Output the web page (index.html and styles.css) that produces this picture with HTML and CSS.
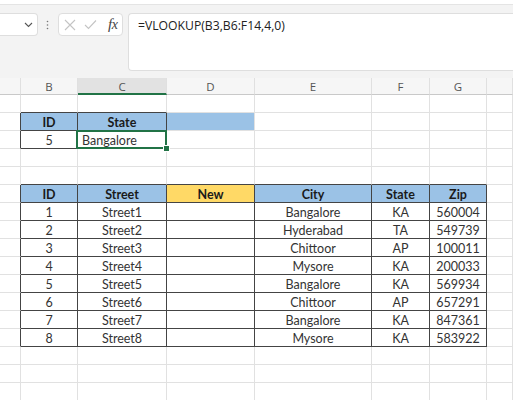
FILE: index.html
```html
<!DOCTYPE html>
<html>
<head>
<meta charset="utf-8">
<link rel="stylesheet" href="styles.css">
</head>
<body>
<div class="top"></div>
<div class="fbar">
  <div class="namebox">
    <svg class="chev" width="9" height="6" viewBox="0 0 9 6"><path d="M1 1 L4.5 4.5 L8 1" fill="none" stroke="#555" stroke-width="1.1"/></svg>
  </div>
  <div class="dots">
    <svg width="3" height="10" viewBox="0 0 3 10"><circle cx="1.5" cy="1.5" r="0.8" fill="#777"/><circle cx="1.5" cy="5" r="0.8" fill="#777"/><circle cx="1.5" cy="8.5" r="0.8" fill="#777"/></svg>
  </div>
  <div class="fxbox">
    <svg class="ico" width="12" height="12" viewBox="0 0 12 12"><path d="M1 1 L11 11 M11 1 L1 11" stroke="#c4c4c4" stroke-width="1.1" fill="none"/></svg>
    <svg class="ico" width="13" height="11" viewBox="0 0 13 11"><path d="M1 6 L4.5 9.5 L12 1.5" stroke="#c4c4c4" stroke-width="1.1" fill="none"/></svg>
    <span class="fx">f<span class="fxx">x</span></span>
  </div>
  <div class="formula">=VLOOKUP(B3,B6:F14,4,0)</div>
</div>
<div class="sheet">
  <div class="h"></div><div class="h">B</div><div class="h hsel">C</div><div class="h">D</div><div class="h">E</div><div class="h">F</div><div class="h">G</div><div class="h"></div>

  <div class="c"></div><div class="c B"></div><div class="c B"></div><div class="c"></div><div class="c"></div><div class="c"></div><div class="c"></div><div class="c"></div>

  <div class="c R"></div><div class="c R B blue b">ID</div><div class="c R B blue b">State</div><div class="c blue"></div><div class="c"></div><div class="c"></div><div class="c"></div><div class="c"></div>

  <div class="c R"></div><div class="c R B">5</div><div class="c R B sel">Bangalore</div><div class="c"></div><div class="c"></div><div class="c"></div><div class="c"></div><div class="c"></div>

  <div class="c"></div><div class="c"></div><div class="c"></div><div class="c"></div><div class="c"></div><div class="c"></div><div class="c"></div><div class="c"></div>

  <div class="c"></div><div class="c B"></div><div class="c B"></div><div class="c B"></div><div class="c B"></div><div class="c B"></div><div class="c B"></div><div class="c"></div>

  <div class="c R"></div><div class="c R B blue b">ID</div><div class="c R B blue b">Street</div><div class="c R B yellow b">New</div><div class="c R B blue b">City</div><div class="c R B blue b">State</div><div class="c R B blue b">Zip</div><div class="c"></div>

  <div class="c R"></div><div class="c R B">1</div><div class="c R B">Street1</div><div class="c R B"></div><div class="c R B">Bangalore</div><div class="c R B">KA</div><div class="c R B">560004</div><div class="c"></div>
  <div class="c R"></div><div class="c R B">2</div><div class="c R B">Street2</div><div class="c R B"></div><div class="c R B">Hyderabad</div><div class="c R B">TA</div><div class="c R B">549739</div><div class="c"></div>
  <div class="c R"></div><div class="c R B">3</div><div class="c R B">Street3</div><div class="c R B"></div><div class="c R B">Chittoor</div><div class="c R B">AP</div><div class="c R B">100011</div><div class="c"></div>
  <div class="c R"></div><div class="c R B">4</div><div class="c R B">Street4</div><div class="c R B"></div><div class="c R B">Mysore</div><div class="c R B">KA</div><div class="c R B">200033</div><div class="c"></div>
  <div class="c R"></div><div class="c R B">5</div><div class="c R B">Street5</div><div class="c R B"></div><div class="c R B">Bangalore</div><div class="c R B">KA</div><div class="c R B">569934</div><div class="c"></div>
  <div class="c R"></div><div class="c R B">6</div><div class="c R B">Street6</div><div class="c R B"></div><div class="c R B">Chittoor</div><div class="c R B">AP</div><div class="c R B">657291</div><div class="c"></div>
  <div class="c R"></div><div class="c R B">7</div><div class="c R B">Street7</div><div class="c R B"></div><div class="c R B">Bangalore</div><div class="c R B">KA</div><div class="c R B">847361</div><div class="c"></div>
  <div class="c R"></div><div class="c R B">8</div><div class="c R B">Street8</div><div class="c R B"></div><div class="c R B">Mysore</div><div class="c R B">KA</div><div class="c R B">583922</div><div class="c"></div>

  <div class="c"></div><div class="c"></div><div class="c"></div><div class="c"></div><div class="c"></div><div class="c"></div><div class="c"></div><div class="c"></div>
  <div class="c"></div><div class="c"></div><div class="c"></div><div class="c"></div><div class="c"></div><div class="c"></div><div class="c"></div><div class="c"></div>
  <div class="c"></div><div class="c"></div><div class="c"></div><div class="c"></div><div class="c"></div><div class="c"></div><div class="c"></div><div class="c"></div>
</div>
</body>
</html>
```
FILE: styles.css
```css
html, body {
  margin: 0;
  padding: 0;
  background: #ffffff;
  width: 513px;
  height: 400px;
  overflow: hidden;
}
.top {
  height: 4px;
  background: #ffffff;
}
.fbar {
  height: 74px;
  box-sizing: border-box;
  border-top: 1px solid #e4e4e4;
  background: #f3f3f3;
  padding-top: 8px;
  display: flex;
  align-items: flex-start;
}
.namebox {
  width: 38px;
  height: 23px;
  box-sizing: border-box;
  background: #fff;
  border: 1px solid #dedede;
  border-left: none;
  border-radius: 0 4px 4px 0;
  display: flex;
  align-items: center;
  justify-content: flex-end;
  padding-right: 4px;
}
.dots {
  margin-left: 8px;
  width: 4px;
  height: 23px;
  display: flex;
  align-items: center;
}
.fxbox {
  margin-left: 8px;
  width: 65px;
  height: 23px;
  box-sizing: border-box;
  background: #fff;
  border: 1px solid #dedede;
  border-radius: 4px;
  display: flex;
  align-items: center;
  padding-left: 5px;
  gap: 8px;
}
.fx {
  font-family: "Liberation Serif", serif;
  font-style: italic;
  font-size: 15px;
  color: #444;
  margin-left: 3px;
  letter-spacing: -0.5px;
}
.fxx { font-size: 14px; }
.formula {
  margin-left: 5px;
  flex: 1;
  height: 58px;
  box-sizing: border-box;
  background: #fff;
  border: 1px solid #dedede;
  border-right: none;
  border-radius: 4px 0 0 4px;
  padding: 3px 0 0 9px;
  font-family: "Open Sans", sans-serif;
  font-size: 12.2px;
  color: #222;
}
.sheet {
  display: grid;
  grid-template-columns: 21px 57px 89px 88px 117px 58px 57px 26px;
  grid-template-rows: 17px;
  grid-auto-rows: 18px;
  font-family: "Lato", sans-serif;
  font-size: 12.5px;
  color: #333;
}
.h {
  box-sizing: border-box;
  background: #f6f6f6;
  border-right: 1px solid #e0e0e0;
  border-bottom: 1px solid #c9c9c9;
  display: flex;
  align-items: center;
  justify-content: center;
  padding-top: 1px;
  font-family: "Open Sans", sans-serif;
  font-size: 11.5px;
  color: #555;
}
.hsel {
  background: #e2e2e2;
  border-bottom: 2px solid #217346;
}
.c {
  box-sizing: border-box;
  border-right: 1px solid #e1e1e1;
  border-bottom: 1px solid #e1e1e1;
  display: flex;
  align-items: center;
  justify-content: center;
  padding-top: 2px;
  white-space: nowrap;
}
.R { border-right-color: #444; }
.B { border-bottom-color: #444; }
.blue { background: #9bc2e6; }
.yellow { background: #ffd966; }
.b { font-weight: bold; color: #1a1a1a; }
.sel {
  position: relative;
  justify-content: flex-start;
  padding-left: 4px;
}
.sel::before {
  content: "";
  position: absolute;
  left: -2px;
  top: -1px;
  right: -1px;
  bottom: -1px;
  border: 2px solid #217346;
}
.sel::after {
  content: "";
  position: absolute;
  right: -4px;
  bottom: -4px;
  width: 5px;
  height: 5px;
  background: #217346;
  border: 1px solid #fff;
}
```
